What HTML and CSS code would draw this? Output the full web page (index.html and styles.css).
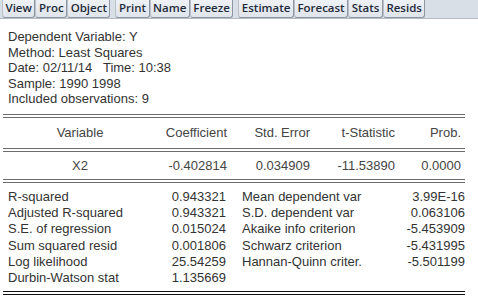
FILE: index.html
```html
<!DOCTYPE html>
<html lang="en">
<head>
    <meta charset="UTF-8">
    <title>Equation: Least Squares</title>
    <link rel="stylesheet" href="styles.css">
</head>
<body>
    <div class="toolbar">
        <div class="group">
            <span class="btn">View</span><span class="btn">Proc</span><span class="btn">Object</span>
        </div>
        <div class="group">
            <span class="btn">Print</span><span class="btn">Name</span><span class="btn">Freeze</span>
        </div>
        <div class="group">
            <span class="btn">Estimate</span><span class="btn">Forecast</span><span class="btn">Stats</span><span class="btn">Resids</span>
        </div>
    </div>

    <div class="output">
        <div class="info">
            <div>Dependent Variable: Y</div>
            <div>Method: Least Squares</div>
            <div>Date: 02/11/14&nbsp;&nbsp; Time: 10:38</div>
            <div>Sample: 1990 1998</div>
            <div>Included observations: 9</div>
        </div>

        <div class="rule"></div>
        <div class="coef head">
            <span class="name">Variable</span>
            <span>Coefficient</span>
            <span>Std. Error</span>
            <span>t-Statistic</span>
            <span>Prob.</span>
        </div>
        <div class="rule"></div>
        <div class="coef">
            <span class="name">X2</span>
            <span>-0.402814</span>
            <span>0.034909</span>
            <span>-11.53890</span>
            <span>0.0000</span>
        </div>
        <div class="rule"></div>

        <div class="stats">
            <span>R-squared</span><span class="num">0.943321</span><span class="lbl2">Mean dependent var</span><span class="num">3.99E-16</span>
            <span>Adjusted R-squared</span><span class="num">0.943321</span><span class="lbl2">S.D. dependent var</span><span class="num">0.063106</span>
            <span>S.E. of regression</span><span class="num">0.015024</span><span class="lbl2">Akaike info criterion</span><span class="num">-5.453909</span>
            <span>Sum squared resid</span><span class="num">0.001806</span><span class="lbl2">Schwarz criterion</span><span class="num">-5.431995</span>
            <span>Log likelihood</span><span class="num">25.54259</span><span class="lbl2">Hannan-Quinn criter.</span><span class="num">-5.501199</span>
            <span>Durbin-Watson stat</span><span class="num">1.135669</span><span></span><span></span>
        </div>
        <div class="rule dark"></div>
    </div>
</body>
</html>
```

FILE: styles.css
```css
body {
    margin: 0;
    background: #fff;
    font-family: "Liberation Sans", Arial, sans-serif;
    font-size: 13px;
    color: #333;
    overflow: hidden;
}
.toolbar {
    display: flex;
    height: 18px;
    padding-left: 2px;
    background: #d9dfe7;
    border-bottom: 1px solid #b4bcc6;
}
.group {
    display: flex;
    margin-right: 5px;
}
.btn {
    padding: 0 2.5px;
    height: 17px;
    line-height: 16px;
    font-family: "Open Sans", sans-serif;
    font-size: 11.5px;
    font-weight: 600;
    color: #1f2b3a;
    background: linear-gradient(#eef1f5, #e0e5eb);
    border: 1px solid #8e97a2;
    border-top: none;
    border-left-color: #b9c0c9;
    border-radius: 0 0 3px 3px;
}
.output {
    width: 462px;
    margin-left: 3px;
}
.info {
    margin-top: 10px;
    padding-left: 5px;
    line-height: 15.6px;
}
.rule {
    height: 2px;
    border-top: 1px solid #6c6c6c;
    border-bottom: 1px solid #6c6c6c;
}
.info + .rule {
    margin-top: 7px;
}
.rule.dark {
    margin-top: 5px;
    border-color: #111;
}
.coef {
    display: grid;
    grid-template-columns: 154px 70px 83px 85px 66px;
    align-items: center;
    height: 27px;
    text-align: right;
    color: #444;
}
.coef.head {
    height: 30px;
}
.coef .name {
    text-align: center;
}
.stats {
    display: grid;
    grid-template-columns: 142px 76px 138px 101px;
    margin-top: 6px;
    padding-left: 5px;
    line-height: 16.2px;
    color: #333;
}
.stats .num {
    text-align: right;
}
.stats .lbl2 {
    padding-left: 16px;
}
```
